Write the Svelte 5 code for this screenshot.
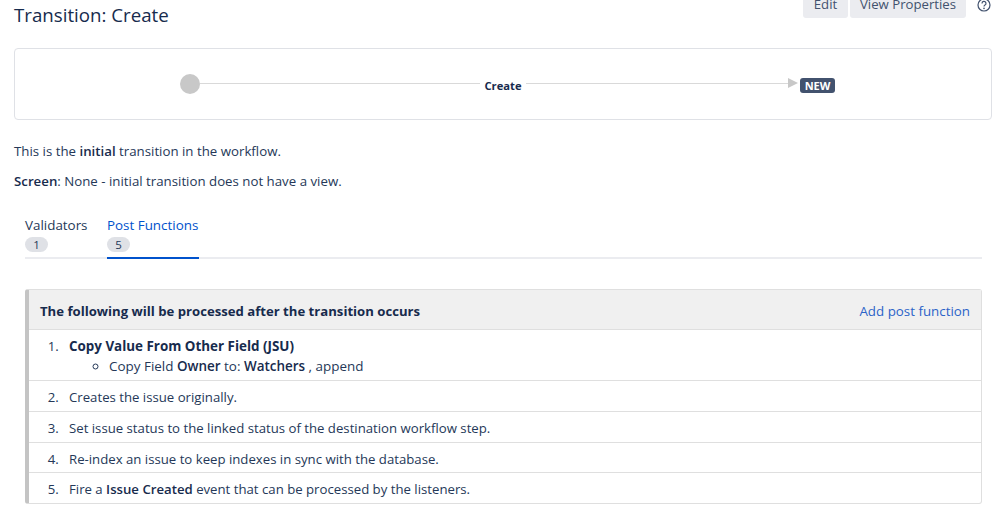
<script lang="ts">
  type Tab = { label: string; count: number; active?: boolean };

  const tabs: Tab[] = [
    { label: 'Validators', count: 1 },
    { label: 'Post Functions', count: 5, active: true },
  ];
</script>

<div class="page">
  <header class="top">
    <h1>Transition: Create</h1>
    <div class="actions">
      <button class="btn edit">Edit</button>
      <button class="btn view">View Properties</button>
      <svg class="help" width="14" height="14" viewBox="0 0 14 14" aria-label="Help">
        <circle cx="7" cy="7" r="6" fill="none" stroke="#42526e" stroke-width="1.2" />
        <path d="M5 5.4a2 2 0 1 1 3 1.7c-.7.4-1 .8-1 1.5" fill="none" stroke="#42526e" stroke-width="1.2" />
        <circle cx="7" cy="10.4" r=".8" fill="#42526e" />
      </svg>
    </div>
  </header>

  <section class="diagram">
    <span class="start"></span>
    <span class="line first"></span>
    <span class="name">Create</span>
    <span class="line second"></span>
    <span class="arrow"></span>
    <span class="status">NEW</span>
  </section>

  <p class="intro">This is the <b>initial</b> transition in the workflow.</p>
  <p class="screen"><b>Screen</b>: None - initial transition does not have a view.</p>

  <nav class="tabs">
    {#each tabs as t (t.label)}
      <div class="tab" class:active={t.active}>
        <span class="label">{t.label}</span>
        <span class="count">{t.count}</span>
      </div>
    {/each}
  </nav>

  <section class="panel">
    <div class="panel-head">
      <b class="strong">The following will be processed after the transition occurs</b>
      <span class="add">Add post function</span>
    </div>
    <ol>
      <li class="jsu">
        <b class="strong title">Copy Value From Other Field (JSU)</b>
        <ul><li>Copy Field <b>Owner</b> to: <b>Watchers</b> , append</li></ul>
      </li>
      <li class="r2">Creates the issue originally.</li>
      <li class="r3">Set issue status to the linked status of the destination workflow step.</li>
      <li class="r4">Re-index an issue to keep indexes in sync with the database.</li>
      <li class="r5">Fire a <b>Issue Created</b> event that can be processed by the listeners.</li>
    </ol>
  </section>
</div>

<style>
  :global(body) { margin: 0; background: #fff; }
  .page {
    width: 999px; height: 514px; overflow: hidden; box-sizing: border-box;
    padding: 0 7px 0 14px;
    font: 13.2px/20px "Open Sans", "Noto Sans", sans-serif;
    color: #253858;
  }
  b { font-weight: 600; color: #172b4d; }
  b.strong { font-weight: 700; font-size: 13.15px; }
  b.title { font-size: 13.4px; }

  .top { display: flex; justify-content: space-between; height: 48px; }
  h1 { margin: 3px 0 0; font: 500 18.7px/24px "Open Sans", sans-serif; color: #172b4d; }
  .actions { display: flex; align-items: flex-start; margin-top: -10px; }
  .btn {
    height: 28px; padding: 0; margin-right: 2px;
    border: 0; border-radius: 3px; background: #ebecf0; color: #42526e;
    font: 13.2px "Open Sans", sans-serif;
  }
  .edit { width: 45px; }
  .view { width: 116px; }
  .help { margin: 8px 1px 0 9px; }

  .diagram {
    height: 70px;
    border: 1px solid #dfe1e6; border-radius: 4px;
    display: flex; align-items: center; padding-left: 165px;
  }
  .start { width: 20px; height: 20px; border-radius: 50%; background: #c8c8c8; margin-top: -1px; }
  .line { height: 1px; background: #d9d9d9; margin-top: -2px; }
  .first { width: 280px; }
  .name { width: 46px; margin-top: 3px; text-align: center; font-size: 11.2px; font-weight: 700; color: #172b4d; }
  .second { width: 262px; }
  .arrow {
    width: 0; height: 0; margin-top: -2px;
    border-left: 10px solid #c8c8c8; border-top: 5px solid transparent; border-bottom: 5px solid transparent;
  }
  .status {
    margin: 2px 0 0 2px; width: 35px; height: 15px; border-radius: 3px;
    background: #42526e; color: #fff; text-align: center;
    font: 700 11px/15px "Open Sans", sans-serif;
  }

  p { margin: 0; font-size: 13.27px; }
  .intro { margin-top: 21px; }
  .screen { margin-top: 10px; }

  .tabs {
    display: flex; gap: 20px; margin: 24px 10px 0 11px; height: 42px;
    border-bottom: 2px solid #ebecf0;
  }
  .tab { display: flex; flex-direction: column; align-items: flex-start; width: 62px; height: 44px; box-sizing: border-box; }
  .tab.active { width: 92px; border-bottom: 2px solid #0052cc; color: #0052cc; }
  .label { line-height: 20px; font-size: 13.4px; white-space: nowrap; }
  .count {
    width: 23px; height: 15px; margin-top: 2px; border-radius: 8px;
    background: #dfe1e6; color: #253858; text-align: center;
    font-size: 11.5px; line-height: 15px;
  }

  .panel {
    margin: 30px 10px 0 11px; height: 215px; box-sizing: border-box;
    border: 1px solid #dfdfdf; border-left: 4px solid #c4c4c4; border-radius: 3px;
  }
  .panel-head {
    height: 40px; box-sizing: border-box; padding: 2px 11px 0;
    background: #f0f0f0; border-bottom: 1px solid #dfdfdf;
    display: flex; justify-content: space-between; align-items: center;
  }
  .add { color: #2b63c8; font-size: 13.35px; }
  ol { margin: 0; padding: 0 0 0 40px; }
  ol > li { box-sizing: border-box; position: relative; padding-top: 6px; }
  ol > li::after {
    content: ""; position: absolute; left: -40px; right: 0; bottom: 0; height: 1px; background: #dfdfdf;
  }
  ol > li:last-child::after { display: none; }
  ol > li::marker { content: counter(list-item) ".   "; color: #253858; }
  .jsu { height: 51px; }
  .r2 { height: 31px; }
  .r3 { height: 31px; }
  .r4 { height: 30px; }
  .r5 { height: 29px; }
  ul { margin: 0; padding: 0 0 0 40px; list-style: circle; font-size: 13.45px; }
</style>
